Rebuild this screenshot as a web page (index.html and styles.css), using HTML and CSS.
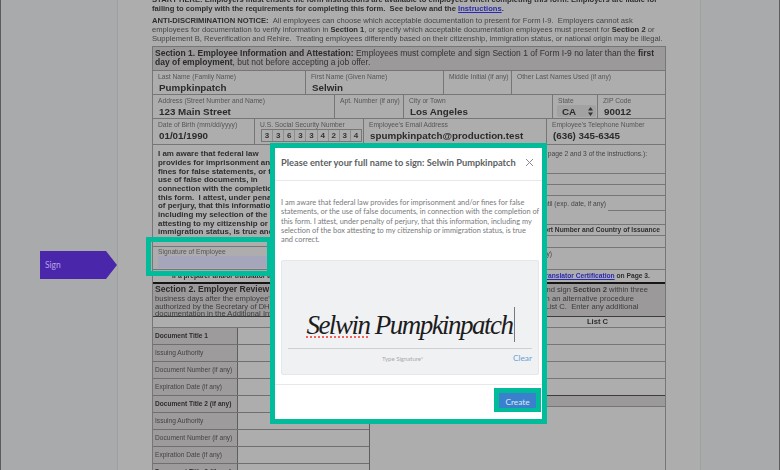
FILE: index.html
```html
<!DOCTYPE html>
<html lang="en">
<head>
  <meta charset="UTF-8">
  <title>Form I-9 Sign</title>
  <link rel="stylesheet" href="styles.css">
</head>
<body>
  <div class="app">
    <div class="rail">
      <div class="sign-tag">Sign</div>
    </div>

    <div class="paper">
      <div class="doc">
        <p class="intro bold">START HERE: Employers must ensure the form instructions are available to employees when completing this form. Employers are liable for<br>failing to comply with the requirements for completing this form. &nbsp;See below and the <a class="doc-link">Instructions</a>.</p>
        <p class="intro"><b>ANTI-DISCRIMINATION NOTICE:</b> &nbsp;All employees can choose which acceptable documentation to present for Form I-9. &nbsp;Employers cannot ask<br>employees for documentation to verify information in <b>Section 1</b>, or specify which acceptable documentation employees must present for <b>Section 2</b> or<br>Supplement B, Reverification and Rehire. &nbsp;Treating employees differently based on their citizenship, immigration status, or national origin may be illegal.</p>

        <div class="form-box">
          <div class="sec-head">
            <b>Section 1. Employee Information and Attestation:</b> Employees must complete and sign Section 1 of Form I-9 no later than the <b>first<br>day of employment</b>, but not before accepting a job offer.
          </div>

          <div class="row row-name">
            <div class="cell"><label>Last Name (Family Name)</label><div class="val">Pumpkinpatch</div></div>
            <div class="cell"><label>First Name (Given Name)</label><div class="val">Selwin</div></div>
            <div class="cell"><label>Middle Initial (if any)</label></div>
            <div class="cell"><label>Other Last Names Used (if any)</label></div>
          </div>
          <div class="row row-addr">
            <div class="cell"><label>Address (Street Number and Name)</label><div class="val">123 Main Street</div></div>
            <div class="cell"><label>Apt. Number (if any)</label></div>
            <div class="cell"><label>City or Town</label><div class="val">Los Angeles</div></div>
            <div class="cell"><label>State</label>
              <div class="state-select">CA
                <svg width="5" height="9" viewBox="0 0 5 9"><path d="M2.5 0 5 3.4H0zM2.5 9 0 5.6h5z" fill="#333"/></svg>
              </div>
            </div>
            <div class="cell"><label>ZIP Code</label><div class="val">90012</div></div>
          </div>
          <div class="row row-dob">
            <div class="cell"><label>Date of Birth (mm/dd/yyyy)</label><div class="val">01/01/1990</div></div>
            <div class="cell"><label>U.S. Social Security Number</label>
              <div class="ssn"><span>3</span><span>3</span><span>6</span><span>3</span><span>3</span><span>4</span><span>2</span><span>3</span><span>4</span></div>
            </div>
            <div class="cell"><label>Employee's Email Address</label><div class="val">spumpkinpatch@production.test</div></div>
            <div class="cell"><label>Employee's Telephone Number</label><div class="val">(636) 345-6345</div></div>
          </div>

          <div class="attest">
            <div class="attest-left">
              <p class="attest-text">I am aware that federal law<br>provides for imprisonment and/or<br>fines for false statements, or the<br>use of false documents, in<br>connection with the completion of<br>this form. &nbsp;I attest, under penalty<br>of perjury, that this information,<br>including my selection of the box<br>attesting to my citizenship or<br>immigration status, is true and</p>
              <div class="sig-cell">
                <label>Signature of Employee</label>
                <div class="sig-field"></div>
              </div>
            </div>
            <div class="attest-right">
              <div class="opt opt-tall">page 2 and 3 of the instructions.):</div>
              <div class="opt opt-thin"></div>
              <div class="opt opt-thin"></div>
              <div class="opt opt-tall opt-until"><span>Authorized until (exp. date, if any)</span><i></i></div>
              <div class="opt opt-thin opt-bold">Foreign Passport Number and Country of Issuance</div>
              <div class="opt opt-thin opt-plain"></div>
              <div class="opt opt-last">(if any)</div>
            </div>
          </div>

          <div class="preparer">If a preparer and/or translator assisted you in completing Section 1, that person MUST complete the <a class="doc-link">Preparer and/or Translator Certification</a> on Page 3.</div>

          <div class="sec-two">
            <div class="sec-two-title"><b class="sec-two-name">Section 2. Employer Review and Attestation:</b> Employers or their authorized representative must complete and sign <b>Section 2</b> within three</div>
            business days after the employee's first day of employment, and must physically examine, or examine consistent with an alternative procedure<br>
            authorized by the Secretary of DHS, documentation from List A OR a combination of documentation from List B and List C. &nbsp;Enter any additional<br>
            documentation in the Additional Information box; see Instructions.
          </div>

          <div class="list-head">List C</div>

          <div class="lists">
            <div class="doc-rows">
              <div class="doc-row strong"><span>Document Title 1</span><i></i></div>
              <div class="doc-row"><span>Issuing Authority</span><i></i></div>
              <div class="doc-row"><span>Document Number (if any)</span><i></i></div>
              <div class="doc-row"><span>Expiration Date (if any)</span><i></i></div>
              <div class="doc-row strong"><span>Document Title 2 (if any)</span><i></i></div>
              <div class="doc-row"><span>Issuing Authority</span><i></i></div>
              <div class="doc-row"><span>Document Number (if any)</span><i></i></div>
              <div class="doc-row"><span>Expiration Date (if any)</span><i></i></div>
              <div class="doc-row strong"><span>Document Title 3 (if any)</span><i></i></div>
            </div>
            <div class="list-c">
              <div class="c-row"></div>
              <div class="c-row"></div>
              <div class="c-row"></div>
              <div class="c-row"></div>
              <div class="c-band"></div>
            </div>
          </div>
        </div>
      </div>
    </div>

    <div class="side"></div>

    <div class="sig-highlight"></div>

    <div class="modal">
      <div class="modal-head">
        <span class="modal-title">Please enter your full name to sign: Selwin Pumpkinpatch</span>
        <svg class="modal-close" width="9" height="9" viewBox="0 0 9 9"><path d="M1 1l7 7M8 1L1 8" stroke="#8a8a8a" stroke-width="1" fill="none"/></svg>
      </div>
      <div class="modal-body">
        <p class="modal-text">I am aware that federal law provides for imprisonment and/or fines for false<br>statements, or the use of false documents, in connection with the completion of<br>this form. I attest, under penalty of perjury, that this information, including my<br>selection of the box attesting to my citizenship or immigration status, is true<br>and correct.</p>
        <div class="sig-box">
          <div class="sig-input"><span class="sig-name"><span class="misspelt">Selwin</span> Pumpkinpatch</span><span class="caret"></span></div>
          <div class="sig-foot">
            <span class="sig-hint">Type Signature*</span>
            <a class="sig-clear">Clear</a>
          </div>
        </div>
      </div>
      <div class="modal-foot">
        <div class="create-ring"><button class="create-btn">Create</button></div>
      </div>
    </div>
  </div>
</body>
</html>
```

FILE: styles.css
```css
* {
  box-sizing: border-box;
}

html, body {
  margin: 0;
  padding: 0;
  height: 100%;
  overflow: hidden;
}

body {
  font-family: "Liberation Sans", Arial, sans-serif;
  background-color: #a9aaac;
}

p {
  margin: 0;
}

.app {
  position: relative;
  display: flex;
  width: 780px;
  height: 470px;
  overflow: hidden;
}

/* left rail with the step marker */
.rail {
  width: 118px;
  flex: none;
  padding: 251px 0 0 40px;
  background-color: #a9aaac;
  border-left: 1px solid #5c5c5e;
  border-right: 1px solid #a0a0a0;
}

.sign-tag {
  width: 77px;
  height: 28px;
  margin-left: -1px;
  padding-left: 5px;
  background-color: #4a26ab;
  clip-path: polygon(0 0, 66px 0, 100% 50%, 66px 100%, 0 100%);
  color: #b5a5e6;
  font-family: Lato, sans-serif;
  font-size: 8.5px;
  line-height: 28px;
}

.paper {
  width: 583px;
  flex: none;
  padding-left: 34px;
  background-color: #adadad;
  border-right: 1px solid #a0a0a0;
}

.side {
  flex: 1;
  background-color: #a9aaac;
  border-right: 1px solid #5c5c5e;
}

/* the form behind the dialog */
.doc {
  width: 514px;
  margin-top: -5px;
  color: #333;
  filter: blur(0.45px);
}

.intro {
  margin-bottom: 3px;
  font-size: 7.62px;
  line-height: 9.1px;
  white-space: nowrap;
  color: #444;
}

.intro.bold {
  font-weight: bold;
  color: #2e2e2e;
}

.intro b {
  color: #2e2e2e;
}

.doc-link {
  color: #2a2ab0;
  font-weight: bold;
  text-decoration: underline;
}

.form-box {
  height: 430px;
  border-right: 1px solid #767676;
  border-left: 1px solid #767676;
  border-top: 1px solid #767676;
}

.sec-head {
  height: 24px;
  padding: 2px 2px 0 2px;
  background-color: #9b9999;
  font-size: 8.5px;
  line-height: 9px;
  white-space: nowrap;
  border-bottom: 1px solid #767676;
}

.sec-head b {
  color: #2a2a2a;
}

.row {
  display: grid;
  border-bottom: 1px solid #767676;
}

.row-name {
  height: 24px;
  grid-template-columns: 153px 138px 68px 1fr;
}

.row-addr {
  height: 24px;
  grid-template-columns: 182px 69px 149px 45px 1fr;
}

.row-dob {
  height: 26px;
  grid-template-columns: 102px 109px 183px 1fr;
}

.cell {
  padding: 1px 0 0 5px;
  border-right: 1px solid #767676;
  min-width: 0;
}

.cell:last-child {
  border-right: none;
}

.cell label,
.sig-cell label {
  display: block;
  font-size: 6.7px;
  line-height: 9px;
  color: #555;
  white-space: nowrap;
}

.val {
  padding-left: 1px;
  font-size: 9.8px;
  font-weight: bold;
  line-height: 13px;
  white-space: nowrap;
  color: #2b2b2b;
}

.state-select {
  display: flex;
  align-items: center;
  justify-content: space-between;
  width: 39px;
  height: 12px;
  margin-left: -1px;
  padding: 0 3px 0 5px;
  background-color: #a2a2a2;
  border-radius: 2px;
  font-size: 9.8px;
  font-weight: bold;
  color: #2b2b2b;
}

.ssn {
  display: flex;
  width: 101px;
  height: 13px;
  margin-left: 1px;
  border: 1px solid #777;
}

.ssn span {
  flex: 1;
  font-size: 8px;
  font-weight: bold;
  line-height: 11px;
  text-align: center;
  border-right: 1px solid #8e8e8e;
}

.ssn span:last-child {
  border-right: none;
}

.attest {
  display: grid;
  grid-template-columns: 393px 119px;
  height: 125px;
  border-bottom: 1px solid #767676;
}

.attest-left {
  display: flex;
  flex-direction: column;
}

.attest-text {
  flex: 1;
  padding: 5px 0 0 5px;
  font-size: 7.95px;
  font-weight: bold;
  line-height: 8.65px;
  white-space: nowrap;
  color: #2e2e2e;
}

.sig-cell {
  height: 23px;
  padding-left: 5px;
  border-top: 1px solid #767676;
}

.sig-field {
  height: 12px;
  background-color: #a5a6bc;
}

.attest-right {
  display: flex;
  flex-direction: column;
  min-width: 0;
}

.opt {
  display: flex;
  flex: none;
  justify-content: flex-end;
  white-space: nowrap;
  border-bottom: 1px solid #767676;
  font-size: 6.7px;
  color: #444;
}

.opt-tall {
  height: 29px;
  padding: 4px 18px 0 0;
  line-height: 9px;
}

.opt-thin {
  height: 11px;
}

.opt-plain {
  height: 12px;
}

.opt-bold {
  padding-right: 5px;
  font-weight: bold;
  line-height: 10px;
  color: #2e2e2e;
}

.opt-until {
  padding: 3px 0 0 0;
}

.opt-until i {
  flex: none;
  width: 57px;
  height: 12px;
  margin-left: 2px;
  border-bottom: 1px solid #767676;
}

.opt-last {
  flex: 1;
  padding: 2px 113px 0 0;
  border-bottom: none;
}

.preparer {
  height: 12px;
  padding-left: 19px;
  font-size: 6.68px;
  font-weight: bold;
  line-height: 12px;
  white-space: nowrap;
  color: #2e2e2e;
}

.sec-two {
  height: 35px;
  padding: 0 2px;
  background-color: #9b9999;
  border-top: 2px solid #161616;
  border-bottom: 1px solid #3c3c3c;
  font-size: 7.62px;
  line-height: 7.6px;
  white-space: nowrap;
  color: #3c3c3c;
}

.sec-two-title {
  padding-top: 1px;
  line-height: 8.5px;
}

.sec-two-name {
  font-size: 8.6px;
  color: #2a2a2a;
}

.list-head {
  height: 11px;
  padding-left: 377px;
  border-bottom: 1px solid #767676;
  font-size: 7.6px;
  font-weight: bold;
  line-height: 10px;
  color: #2e2e2e;
  text-align: center;
}

.lists {
  display: grid;
  grid-template-columns: 217px 1fr;
}

.doc-rows {
  border-right: 1px solid #5e5e5e;
}

.doc-row {
  display: grid;
  grid-template-columns: 85px 1fr;
  height: 17px;
  border-bottom: 1px solid #6f6f6f;
}

.doc-row span {
  padding-left: 2px;
  background-color: #9d9b9b;
  border-right: 1px solid #5e5e5e;
  font-size: 6.6px;
  line-height: 16px;
  white-space: nowrap;
  color: #444;
}

.doc-row.strong span {
  font-weight: bold;
  color: #2e2e2e;
}

.c-row {
  height: 17px;
  border-bottom: 1px solid #767676;
}

.c-band {
  height: 12px;
  margin-top: -1px;
  background-color: #9b9999;
  border-top: 1px solid #3c3c3c;
  border-bottom: 1px solid #767676;
}

/* teal highlight round the signature cell */
.sig-highlight {
  position: absolute;
  left: 146px;
  top: 237px;
  width: 126px;
  height: 39px;
  border: 5px solid #00bc9b;
}

/* dialog */
.modal {
  position: absolute;
  left: 270px;
  top: 143px;
  width: 277px;
  height: 281px;
  display: flex;
  flex-direction: column;
  background-color: #fff;
  border: 5px solid #00bc9b;
  font-family: Lato, sans-serif;
}

.modal-head {
  display: flex;
  align-items: center;
  justify-content: space-between;
  height: 33px;
  padding: 0 8px 4px 6px;
  border-bottom: 1px solid #e8e8ea;
}

.modal-title {
  font-size: 9.25px;
  font-weight: bold;
  color: #5c5f63;
  white-space: nowrap;
}

.modal-body {
  flex: 1;
  padding: 17px 3px 0 6px;
}

.modal-text {
  font-size: 7.4px;
  line-height: 9.25px;
  color: #77797c;
  white-space: nowrap;
}

.sig-box {
  display: flex;
  flex-direction: column;
  height: 115px;
  margin-top: 16px;
  padding: 0 6px;
  background-color: #f0f1f3;
  border: 1px solid #e6e7ea;
  border-radius: 2px;
}

.sig-input {
  display: flex;
  align-items: flex-end;
  justify-content: center;
  height: 88px;
  padding: 0 0 6px 1px;
  border-bottom: 1px solid #cfd0d3;
}

.sig-name {
  font-family: "Liberation Serif", serif;
  font-size: 27px;
  font-style: italic;
  line-height: 34px;
  letter-spacing: -1.5px;
  color: #1c1c1c;
  white-space: nowrap;
}

.misspelt {
  text-decoration: underline dotted #f0625a 2px;
  text-underline-offset: 2px;
}

.caret {
  width: 1px;
  height: 35px;
  margin-left: 1px;
  background-color: #77797c;
}

.sig-foot {
  display: flex;
  align-items: center;
  justify-content: space-between;
  padding: 4px 0 0 94px;
}

.sig-hint {
  font-size: 6px;
  color: #a7a9ad;
}

.sig-clear {
  font-size: 8.3px;
  color: #6ba0d6;
}

.modal-foot {
  display: flex;
  justify-content: flex-end;
  height: 35px;
  padding: 3px 1px 0 0;
  border-top: 1px solid #e8e8ea;
}

.create-ring {
  width: 47px;
  height: 24px;
  padding: 5px 5px 4px 5px;
  background-color: #00bc9b;
}

.create-btn {
  display: block;
  width: 37px;
  height: 15px;
  padding: 2px 0 0 0;
  background-color: #3a80cc;
  border: none;
  font-family: Lato, sans-serif;
  font-size: 8.3px;
  color: #dce9f6;
}
```
